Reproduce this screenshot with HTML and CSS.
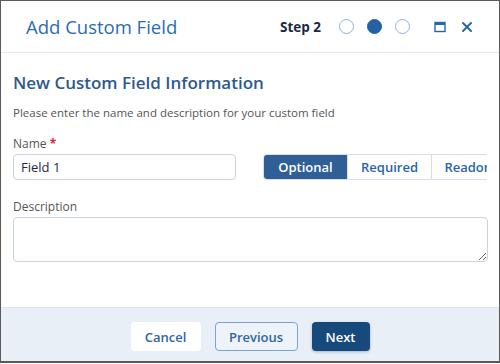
FILE: index.html
```html
<!DOCTYPE html>
<html lang="en">
<head>
  <meta charset="UTF-8">
  <meta name="viewport" content="width=device-width, initial-scale=1.0">
  <title>Add Custom Field</title>
  <link rel="stylesheet" href="styles.css">
</head>
<body>
  <div class="dialog">
    <div class="header">
      <h1>Add Custom Field</h1>
      <span class="step">Step 2</span>
      <div class="steps">
        <span class="dot"></span>
        <span class="dot active"></span>
        <span class="dot"></span>
      </div>
      <button class="icon-btn" aria-label="Maximize">
        <svg width="12" height="12" viewBox="0 0 12 12"><rect x="1" y="1.5" width="10" height="9" fill="none" stroke="#2a65a8" stroke-width="1.4"/><rect x="1" y="1.5" width="10" height="2.5" fill="#2a65a8"/></svg>
      </button>
      <button class="icon-btn" aria-label="Close">
        <svg width="12" height="12" viewBox="0 0 12 12"><path d="M2 2 L10 10 M10 2 L2 10" stroke="#2a65a8" stroke-width="2" stroke-linecap="round"/></svg>
      </button>
    </div>

    <div class="content">
      <h2>New Custom Field Information</h2>
      <p class="hint">Please enter the name and description for your custom field</p>

      <label class="label">Name <span class="req">*</span></label>
      <div class="name-row">
        <input type="text" class="field" value="Field 1">
        <div class="segments">
          <button class="seg active">Optional</button>
          <button class="seg">Required</button>
          <button class="seg">Readonly</button>
        </div>
      </div>

      <label class="label desc-label">Description</label>
      <textarea class="area"></textarea>
    </div>

    <div class="footer">
      <button class="btn cancel">Cancel</button>
      <button class="btn prev">Previous</button>
      <button class="btn next">Next</button>
    </div>
  </div>
</body>
</html>
```

FILE: styles.css
```css
/* Dialog */
* {
  box-sizing: border-box;
}

body {
  margin: 0;
  font-family: "Open Sans", Arial, sans-serif;
  background: #fff;
}

.dialog {
  width: 500px;
  height: 363px;
  border: 1px solid #5a5a5a;
  border-bottom-width: 2px;
  display: flex;
  flex-direction: column;
  background: #fff;
}

.header {
  height: 52px;
  display: flex;
  align-items: center;
  padding: 0 26px 0 25px;
  border-bottom: 1px solid #ddeaf6;
}

h1 {
  margin: 0;
  font-size: 18.5px;
  font-weight: 400;
  color: #2a6cb5;
  flex: 1;
}

.step {
  font-size: 13.5px;
  font-weight: 700;
  color: #1b2946;
  margin-right: 18px;
}

.steps {
  display: flex;
  gap: 13px;
  margin-right: 24px;
}

.dot {
  width: 15px;
  height: 15px;
  border-radius: 50%;
  border: 1.5px solid #8fb3d9;
}

.dot.active {
  background: #2462a5;
  border-color: #2462a5;
}

.icon-btn {
  border: none;
  background: none;
  padding: 0;
  width: 12px;
  height: 12px;
  display: flex;
  margin-left: 15px;
}

.icon-btn:first-of-type {
  margin-left: 0;
}

.content {
  flex: 1;
  padding: 18px 12px 0 12px;
}

h2 {
  margin: 0;
  font-size: 17px;
  font-weight: 600;
  color: #2c5a8e;
}

.hint {
  margin: 11px 0 0;
  font-size: 11.5px;
  color: #555;
}

.label {
  display: block;
  font-size: 12px;
  color: #555;
  margin-top: 15px;
  margin-bottom: 2px;
}

.req {
  color: #e0232e;
  font-weight: 700;
}

.name-row {
  display: flex;
  gap: 27px;
  overflow: hidden;
}

.field {
  width: 223px;
  height: 26px;
  border: 1px solid #c9d4e2;
  border-radius: 4px;
  padding: 0 7px;
  font-family: inherit;
  font-size: 13px;
  color: #1b2946;
  flex-shrink: 0;
}

.segments {
  display: flex;
  flex-shrink: 0;
  height: 26px;
  border: 1px solid #d6dfeb;
  border-radius: 4px;
}

.seg {
  width: 84px;
  border: none;
  border-left: 1px solid #d6dfeb;
  background: #fff;
  font-family: inherit;
  font-size: 13px;
  font-weight: 600;
  color: #2a65a8;
  padding: 0;
}

.seg:first-child {
  border-left: none;
  width: 83px;
}

.seg.active {
  background: #2f5f96;
  color: #fff;
  border-radius: 3px 0 0 3px;
}

.desc-label {
  margin-top: 18px;
}

.area {
  display: block;
  width: 475px;
  height: 45px;
  border: 1px solid #c9d4e2;
  border-radius: 4px;
  resize: vertical;
  font-family: inherit;
}

.footer {
  height: 54px;
  background: #e8eff7;
  border-top: 1px solid #dce7f2;
  display: flex;
  justify-content: center;
  align-items: flex-start;
  padding-top: 14px;
  gap: 14px;
}

.btn {
  height: 29px;
  font-family: inherit;
  font-size: 13px;
  font-weight: 600;
  border-radius: 4px;
  padding: 0;
}

.cancel {
  width: 70px;
  background: #fff;
  border: none;
  color: #2f64a0;
}

.prev {
  width: 83px;
  background: #eef3f9;
  border: 1px solid #7aa2cc;
  color: #2f64a0;
}

.next {
  width: 58px;
  background: #174a7c;
  border: none;
  color: #fff;
  box-shadow: 0 1px 3px rgba(0, 0, 0, 0.25);
}
```
